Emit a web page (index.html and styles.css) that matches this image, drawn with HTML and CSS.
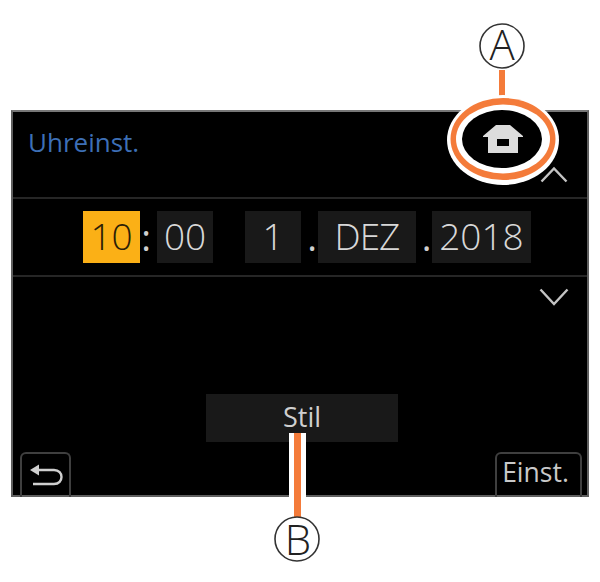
FILE: index.html
```html
<!DOCTYPE html>
<html lang="de">
<head>
<meta charset="utf-8">
<title>Uhreinst.</title>
<link rel="stylesheet" href="styles.css">
</head>
<body>
<main class="page">
  <section class="screen">
    <header class="head">
      <h1 class="title">Uhreinst.</h1>
      <svg class="chev chev-up" width="28" height="17" viewBox="0 0 28 17"><path class="chev-line" d="M1.5 15.5 L14 2.5 L26.5 15.5"/></svg>
    </header>
    <div class="date-row">
      <span class="cell cell-hour cell-on">10</span>
      <span class="sep sep-colon">:</span>
      <span class="cell cell-two">00</span>
      <span class="gap"></span>
      <span class="cell cell-two">1</span>
      <span class="sep sep-dot">.</span>
      <span class="cell cell-month">DEZ</span>
      <span class="sep sep-dot sep-narrow">.</span>
      <span class="cell cell-year">2018</span>
    </div>
    <div class="lower">
      <div class="down-row">
        <svg class="chev" width="30" height="18" viewBox="0 0 30 18"><path class="chev-line" d="M1.5 1.5 L15 16 L28.5 1.5"/></svg>
      </div>
      <button class="style-btn">Stil</button>
      <footer class="foot">
        <div class="tab tab-back">
          <svg width="34" height="24" viewBox="0 0 34 24"><path class="back-line" d="M8 6 H24 C34 6 34 20 24 20 H3"/><path class="back-head" d="M0 6 L9 0.5 L9 11.5 Z"/></svg>
        </div>
        <div class="tab tab-set">Einst.</div>
      </footer>
    </div>
  </section>
  <svg class="callouts" width="600" height="582" viewBox="0 0 600 582">
    <rect class="line-orange" x="499" y="70" width="6" height="30"/>
    <ellipse class="fill-white" cx="503" cy="140" rx="56" ry="45"/>
    <ellipse class="fill-orange" cx="503" cy="139" rx="52.5" ry="41"/>
    <ellipse class="fill-white" cx="503" cy="139" rx="47" ry="34.5"/>
    <ellipse class="fill-black" cx="502" cy="139" rx="40" ry="29"/>
    <path class="home-shape" d="M496 125 H510 L523 136 V137 H518 V153 H488 V137 H483 V136 Z M497 139 V146 H509 V139 Z"/>
    <rect class="fill-white" x="289" y="433" width="17" height="64"/>
    <rect class="line-orange" x="294" y="433" width="7" height="85"/>
    <circle class="ring" cx="502" cy="46" r="22"/>
    <text class="ring-text" x="502" y="60">A</text>
    <circle class="ring" cx="297" cy="539" r="22"/>
    <text class="ring-text" x="298" y="555">B</text>
  </svg>
</main>
</body>
</html>
```
FILE: styles.css
```css
html, body {
  margin: 0;
  padding: 0;
  background: #fff;
}

.page {
  position: relative;
  width: 600px;
  height: 582px;
  overflow: hidden;
  padding: 110px 11px 0;
  box-sizing: border-box;
  font-family: "Open Sans", "Noto Sans", sans-serif;
}

.screen {
  width: 578px;
  height: 387px;
  box-sizing: border-box;
  border: 2px solid #5f5f5f;
  border-top-color: #777;
  background: #000;
  display: flex;
  flex-direction: column;
}

.head {
  height: 85px;
  border-bottom: 2px solid #262626;
  display: flex;
  align-items: flex-start;
  flex: none;
}

.title {
  margin: 15px 0 0 15px;
  flex: 1;
  font-size: 26px;
  line-height: 30px;
  font-weight: 400;
  color: #3d6fb6;
}

.home-shape {
  fill: #dcdcdc;
  fill-rule: evenodd;
}

.chev {
  display: block;
}

.chev-up {
  align-self: flex-end;
  margin: 0 19px 14px 19px;
}

.chev-line {
  fill: none;
  stroke: #c4c4c4;
  stroke-width: 2.4;
}

.date-row {
  height: 76px;
  box-sizing: content-box;
  border-bottom: 2px solid #262626;
  padding: 0 0 0 70px;
  display: flex;
  align-items: center;
  flex: none;
}

.cell {
  height: 52px;
  background: #191919;
  color: #d8d8d8;
  font-size: 37px;
  font-weight: 300;
  line-height: 50px;
  text-align: center;
}

.cell-on {
  background: #fbb016;
  color: #2b2006;
}

.cell-hour { width: 57px; }
.cell-two { width: 56px; }
.cell-month { width: 98px; letter-spacing: -1px; }
.cell-year { width: 99px; }

.sep {
  box-sizing: border-box;
  width: 17px;
  color: #cfcfcf;
  font-size: 37px;
  line-height: 50px;
  text-align: center;
}

.sep-colon { padding-right: 5px; }
.sep-dot { padding-left: 5px; }
.sep-narrow { width: 16px; }

.gap { width: 32px; }

.lower {
  flex: 1;
  display: flex;
  flex-direction: column;
  min-height: 0;
}

.down-row {
  display: flex;
  justify-content: flex-end;
  padding: 11px 18px 0 0;
}

.style-btn {
  display: block;
  width: 192px;
  height: 48px;
  margin: auto 0 10px 193px;
  padding: 0 0 3px;
  border: 0;
  background: #191919;
  color: #cfcfcf;
  font-family: inherit;
  font-size: 27px;
  line-height: 45px;
}

.foot {
  display: flex;
  justify-content: space-between;
  padding: 0 5px 0 7px;
  height: 43px;
  flex: none;
}

.tab {
  box-sizing: border-box;
  height: 45px;
  border: 2px solid #3f3f3f;
  border-bottom: 0;
  border-radius: 6px 6px 0 0;
  color: #c9c9c9;
}

.tab-back {
  width: 51px;
  padding: 10px 0 0 8px;
}

.tab-back svg {
  display: block;
}

.back-line {
  fill: none;
  stroke: #cfcfcf;
  stroke-width: 2.4;
}

.back-head {
  fill: #cfcfcf;
}

.tab-set {
  width: 87px;
  padding-right: 6px;
  font-size: 26.5px;
  line-height: 36px;
  text-align: center;
}

.callouts {
  position: absolute;
  left: 0;
  top: 0;
  pointer-events: none;
}

.fill-white { fill: #fff; }
.fill-orange { fill: #f47b3a; }
.fill-black { fill: #000; }
.line-orange { fill: #f47b3a; }

.ring {
  fill: #fff;
  stroke: #333;
  stroke-width: 1.6;
}

.ring-text {
  font-family: "Open Sans", sans-serif;
  font-size: 42px;
  font-weight: 300;
  text-anchor: middle;
  fill: #222;
}
```
